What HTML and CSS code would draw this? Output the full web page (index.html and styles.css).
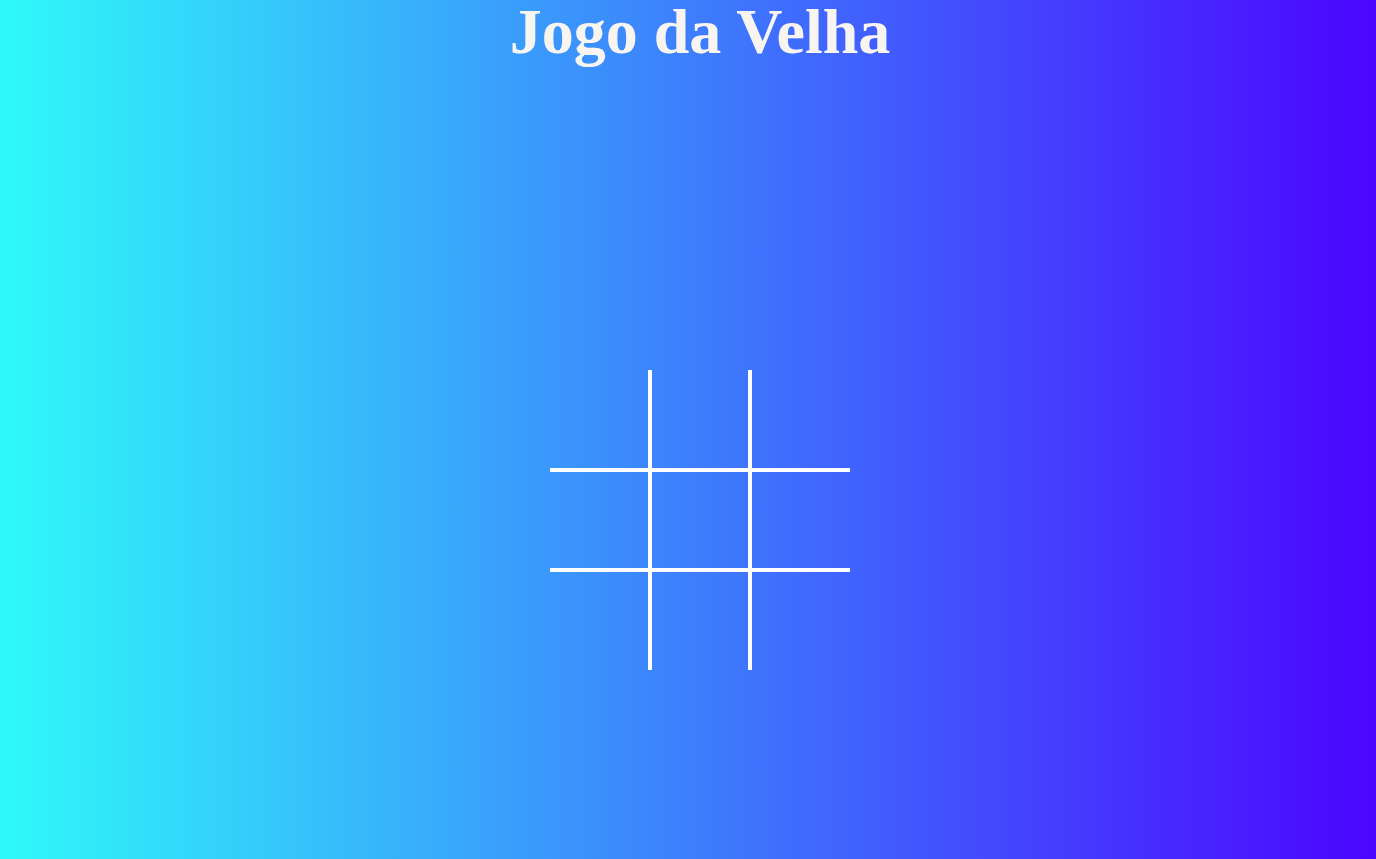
FILE: index.html
```html
<!DOCTYPE html>
<html lang="pt">
<head>
<meta charset="utf-8">
<title>Jogo da Velha</title>
<link rel="stylesheet" href="styles.css">
</head>
<body>
<main class="page">
  <h1 class="title">Jogo da Velha</h1>
  <div class="board">
    <div class="cell c0"></div>
    <div class="cell c1"></div>
    <div class="cell c2"></div>
    <div class="cell c3"></div>
    <div class="cell c4"></div>
    <div class="cell c5"></div>
    <div class="cell c6"></div>
    <div class="cell c7"></div>
    <div class="cell c8"></div>
  </div>
</main>
</body>
</html>
```
FILE: styles.css
```css
html, body {
  margin: 0;
  padding: 0;
  height: 100%;
}
body {
  background: linear-gradient(to right, #2ff9f9, #4b05ff);
  font-family: "Liberation Serif", "Times New Roman", serif;
  overflow: hidden;
}
.page {
  box-sizing: border-box;
  height: 100vh;
  padding-left: 24px;
  display: flex;
  flex-direction: column;
  align-items: center;
}
.title {
  margin: 0;
  font-size: 64px;
  line-height: 1;
  font-weight: bold;
  color: #f8f5f0;
}
.board {
  margin-top: 306px;
  display: grid;
  grid-template-columns: repeat(3, 100px);
  grid-template-rows: repeat(3, 100px);
}
.cell {
  box-sizing: border-box;
  border: 0 solid #ffffff;
}
.c0, .c1, .c3, .c4 { border-right-width: 2px; }
.c1, .c2, .c4, .c5, .c7, .c8 { border-left-width: 2px; }
.c4, .c5, .c7, .c8, .c3, .c6 { }
.c3, .c4, .c5, .c6, .c7, .c8 { border-top-width: 2px; }
.c0, .c1, .c2, .c3, .c4, .c5 { border-bottom-width: 2px; }
.c6, .c7 { border-right-width: 2px; }
.c2, .c5, .c8 { border-right-width: 0; }
.c0, .c3, .c6 { border-left-width: 0; }
```
